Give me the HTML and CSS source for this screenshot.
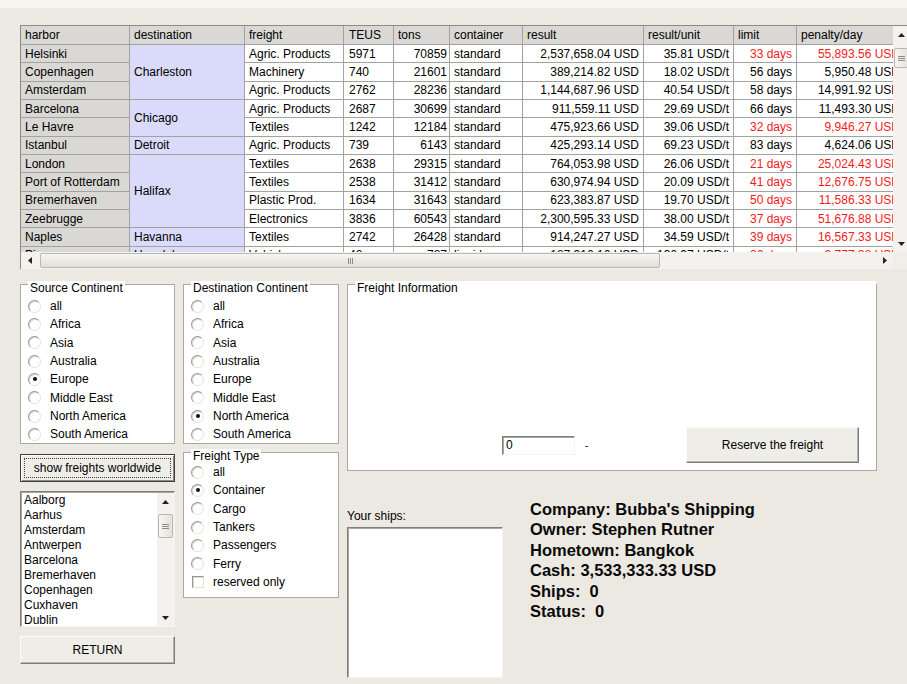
FILE: index.html
```html
<!DOCTYPE html>
<html lang="en">
<head>
<meta charset="utf-8">
<title>Freight Market</title>
<link rel="stylesheet" href="styles.css">
</head>
<body>
<div class="window">
  <div class="top-strip"></div>

  <section class="gridbox">
    <div class="grid-main">
      <div class="grid-clip">
        <table class="grid">
          <colgroup>
            <col class="w-harbor"><col class="w-dest"><col class="w-freight"><col class="w-teus"><col class="w-tons">
            <col class="w-cont"><col class="w-result"><col class="w-unit"><col class="w-limit"><col class="w-penalty">
          </colgroup>
          <thead>
            <tr><th>harbor</th><th>destination</th><th>freight</th><th class="teus">TEUS</th><th>tons</th><th>container</th><th>result</th><th>result/unit</th><th>limit</th><th>penalty/day</th></tr>
          </thead>
          <tbody>
            <tr><td class="harbor">Helsinki</td><td class="dest" rowspan="3">Charleston</td><td>Agric. Products</td><td class="teus">5971</td><td class="tons">70859</td><td>standard</td><td class="num">2,537,658.04 USD</td><td class="num">35.81 USD/t</td><td class="num late">33 days</td><td class="num late">55,893.56 USD</td></tr>
            <tr><td class="harbor">Copenhagen</td><td>Machinery</td><td class="teus">740</td><td class="tons">21601</td><td>standard</td><td class="num">389,214.82 USD</td><td class="num">18.02 USD/t</td><td class="num">56 days</td><td class="num">5,950.48 USD</td></tr>
            <tr><td class="harbor">Amsterdam</td><td>Agric. Products</td><td class="teus">2762</td><td class="tons">28236</td><td>standard</td><td class="num">1,144,687.96 USD</td><td class="num">40.54 USD/t</td><td class="num">58 days</td><td class="num">14,991.92 USD</td></tr>
            <tr><td class="harbor">Barcelona</td><td class="dest" rowspan="2">Chicago</td><td>Agric. Products</td><td class="teus">2687</td><td class="tons">30699</td><td>standard</td><td class="num">911,559.11 USD</td><td class="num">29.69 USD/t</td><td class="num">66 days</td><td class="num">11,493.30 USD</td></tr>
            <tr><td class="harbor">Le Havre</td><td>Textiles</td><td class="teus">1242</td><td class="tons">12184</td><td>standard</td><td class="num">475,923.66 USD</td><td class="num">39.06 USD/t</td><td class="num late">32 days</td><td class="num late">9,946.27 USD</td></tr>
            <tr><td class="harbor">Istanbul</td><td class="dest">Detroit</td><td>Agric. Products</td><td class="teus">739</td><td class="tons">6143</td><td>standard</td><td class="num">425,293.14 USD</td><td class="num">69.23 USD/t</td><td class="num">83 days</td><td class="num">4,624.06 USD</td></tr>
            <tr><td class="harbor">London</td><td class="dest" rowspan="4">Halifax</td><td>Textiles</td><td class="teus">2638</td><td class="tons">29315</td><td>standard</td><td class="num">764,053.98 USD</td><td class="num">26.06 USD/t</td><td class="num late">21 days</td><td class="num late">25,024.43 USD</td></tr>
            <tr><td class="harbor">Port of Rotterdam</td><td>Textiles</td><td class="teus">2538</td><td class="tons">31412</td><td>standard</td><td class="num">630,974.94 USD</td><td class="num">20.09 USD/t</td><td class="num late">41 days</td><td class="num late">12,676.75 USD</td></tr>
            <tr><td class="harbor">Bremerhaven</td><td>Plastic Prod.</td><td class="teus">1634</td><td class="tons">31643</td><td>standard</td><td class="num">623,383.87 USD</td><td class="num">19.70 USD/t</td><td class="num late">50 days</td><td class="num late">11,586.33 USD</td></tr>
            <tr><td class="harbor">Zeebrugge</td><td>Electronics</td><td class="teus">3836</td><td class="tons">60543</td><td>standard</td><td class="num">2,300,595.33 USD</td><td class="num">38.00 USD/t</td><td class="num late">37 days</td><td class="num late">51,676.88 USD</td></tr>
            <tr><td class="harbor">Naples</td><td class="dest">Havanna</td><td>Textiles</td><td class="teus">2742</td><td class="tons">26428</td><td>standard</td><td class="num">914,247.27 USD</td><td class="num">34.59 USD/t</td><td class="num late">39 days</td><td class="num late">16,567.33 USD</td></tr>
            <tr><td class="harbor">Piraeus</td><td class="dest">Honolulu</td><td>Vehicles</td><td class="teus">42</td><td class="tons">787</td><td>liquid</td><td class="num">187,316.16 USD</td><td class="num">136.97 USD/t</td><td class="num late">26 days</td><td class="num late">3,777.38 USD</td></tr>
          </tbody>
        </table>
      </div>
      <div class="vscroll">
        <div class="sb-btn"><svg width="7" height="4" viewBox="0 0 7 4"><polygon points="0,4 7,4 3.5,0" fill="#222"/></svg></div>
        <div class="sb-thumb v-thumb grid-vthumb"><i></i><i></i><i></i></div>
        <div class="sb-fill"></div>
        <div class="sb-btn"><svg width="7" height="4" viewBox="0 0 7 4"><polygon points="0,0 7,0 3.5,4" fill="#222"/></svg></div>
      </div>
    </div>
    <div class="hscroll-row">
      <div class="hscroll">
        <div class="sb-btn h-btn"><svg width="4" height="7" viewBox="0 0 4 7"><polygon points="4,0 4,7 0,3.5" fill="#222"/></svg></div>
        <div class="sb-thumb h-thumb"><i></i><i></i><i></i></div>
        <div class="sb-fill"></div>
        <div class="sb-btn h-btn"><svg width="4" height="7" viewBox="0 0 4 7"><polygon points="0,0 0,7 4,3.5" fill="#222"/></svg></div>
      </div>
      <div class="sb-corner"></div>
    </div>
  </section>

  <div class="lower">
    <div class="col col-a">
      <div class="group group-cont">
        <div class="group-title">Source Continent</div>
        <div class="opt"><span class="rb"></span>all</div>
        <div class="opt"><span class="rb"></span>Africa</div>
        <div class="opt"><span class="rb"></span>Asia</div>
        <div class="opt"><span class="rb"></span>Australia</div>
        <div class="opt"><span class="rb on"></span>Europe</div>
        <div class="opt"><span class="rb"></span>Middle East</div>
        <div class="opt"><span class="rb"></span>North America</div>
        <div class="opt"><span class="rb"></span>South America</div>
      </div>
      <div class="btn btn-default"><span class="focus">show freights worldwide</span></div>
      <div class="listbox harbors">
        <div class="list-items">
          <div>Aalborg</div><div>Aarhus</div><div>Amsterdam</div><div>Antwerpen</div><div>Barcelona</div>
          <div>Bremerhaven</div><div>Copenhagen</div><div>Cuxhaven</div><div>Dublin</div>
        </div>
        <div class="vscroll list-scroll">
          <div class="sb-btn"><svg width="7" height="4" viewBox="0 0 7 4"><polygon points="0,4 7,4 3.5,0" fill="#222"/></svg></div>
          <div class="sb-thumb v-thumb list-vthumb"><i></i><i></i><i></i></div>
          <div class="sb-fill"></div>
          <div class="sb-btn"><svg width="7" height="4" viewBox="0 0 7 4"><polygon points="0,0 7,0 3.5,4" fill="#222"/></svg></div>
        </div>
      </div>
      <div class="btn btn-return">RETURN</div>
    </div>

    <div class="col col-b">
      <div class="group group-cont">
        <div class="group-title">Destination Continent</div>
        <div class="opt"><span class="rb"></span>all</div>
        <div class="opt"><span class="rb"></span>Africa</div>
        <div class="opt"><span class="rb"></span>Asia</div>
        <div class="opt"><span class="rb"></span>Australia</div>
        <div class="opt"><span class="rb"></span>Europe</div>
        <div class="opt"><span class="rb"></span>Middle East</div>
        <div class="opt"><span class="rb on"></span>North America</div>
        <div class="opt"><span class="rb"></span>South America</div>
      </div>
      <div class="group group-type">
        <div class="group-title">Freight Type</div>
        <div class="opt"><span class="rb"></span>all</div>
        <div class="opt"><span class="rb on"></span>Container</div>
        <div class="opt"><span class="rb"></span>Cargo</div>
        <div class="opt"><span class="rb"></span>Tankers</div>
        <div class="opt"><span class="rb"></span>Passengers</div>
        <div class="opt"><span class="rb"></span>Ferry</div>
        <div class="opt"><span class="cb"></span>reserved only</div>
      </div>
    </div>

    <div class="col col-c">
      <div class="group freight-info">
        <div class="group-title">Freight Information</div>
        <div class="reserve-row">
          <div class="field">0</div>
          <span class="dash">-</span>
          <div class="btn btn-reserve">Reserve the freight</div>
        </div>
      </div>
      <div class="company-row">
        <div class="ships">
          <div class="ships-label">Your ships:</div>
          <div class="listbox ships-list"></div>
        </div>
        <div class="owner">
          <div>Company: Bubba's Shipping</div>
          <div>Owner: Stephen Rutner</div>
          <div>Hometown: Bangkok</div>
          <div>Cash: 3,533,333.33 USD</div>
          <div>Ships:&nbsp; 0</div>
          <div>Status:&nbsp; 0</div>
        </div>
      </div>
    </div>
  </div>
</div>
</body>
</html>
```

FILE: styles.css
```css
html, body {
  margin: 0;
  padding: 0;
  overflow: hidden;
}

body {
  background: #ece9e2;
  font-family: "Liberation Sans", Arial, sans-serif;
  font-size: 12px;
  color: #000;
}

.window {
  width: 907px;
  height: 684px;
  overflow: hidden;
}

.top-strip {
  height: 8px;
  background: #f6f5f1;
}

/* ---------- data grid ---------- */
.gridbox {
  margin: 17px 0 0 20px;
  width: 890px;
  border-top: 1px solid #8a8a86;
  border-left: 1px solid #8a8a86;
}

.grid-main {
  display: flex;
  height: 226px;
}

.grid-clip {
  width: 872px;
  overflow: hidden;
  background: #fff;
}

.grid {
  border-collapse: separate;
  border-spacing: 0;
  table-layout: fixed;
  width: 884px;
}

.w-harbor { width: 109px; }
.w-dest { width: 115px; }
.w-freight { width: 99px; }
.w-teus { width: 50px; }
.w-tons { width: 56px; }
.w-cont { width: 73px; }
.w-result { width: 121px; }
.w-unit { width: 90px; }
.w-limit { width: 63px; }
.w-penalty { width: 108px; }

.grid th,
.grid td {
  border-right: 1px solid #a2a2a0;
  border-bottom: 1px solid #a2a2a0;
  padding: 0 4px;
  white-space: nowrap;
  overflow: hidden;
  text-align: left;
  font-weight: normal;
  line-height: 14px;
  vertical-align: middle;
}

.grid thead tr { height: 19px; }
.grid tbody tr { height: 18.33px; }

.grid th,
.grid td.harbor {
  background: #d9d8d4;
}

.grid td.dest {
  background: #dadafa;
}

.grid .teus { padding-left: 5px; }
.grid td.tons { text-align: right; padding-right: 2px; }
.grid td.num { text-align: right; }
.grid td.late { color: #f51a1a; }

/* ---------- scrollbars ---------- */
.vscroll {
  width: 17px;
  flex: none;
  display: flex;
  flex-direction: column;
  background: #f3f2ee;
}

.sb-btn {
  width: 17px;
  height: 17px;
  flex: none;
  display: flex;
  align-items: center;
  justify-content: center;
}

.sb-fill { flex: 1; }

.sb-thumb {
  box-sizing: border-box;
  border: 1px solid #b9b8b1;
  border-radius: 2px;
  display: flex;
  align-items: center;
  justify-content: center;
}

.v-thumb {
  margin: 0 1px;
  flex-direction: column;
  gap: 1px;
  background: linear-gradient(to right, #f7f6f2, #e2e1da);
}

.v-thumb i {
  display: block;
  width: 7px;
  height: 1px;
  background: #8e8d88;
}

.grid-vthumb {
  margin-top: 5px;
  height: 20px;
}

.hscroll-row {
  display: flex;
  height: 17px;
}

.hscroll {
  width: 872px;
  display: flex;
  background: #f3f2ee;
}

.h-btn { height: 17px; }

.h-thumb {
  margin: 1px 0 1px 2px;
  width: 620px;
  gap: 1px;
  background: linear-gradient(to bottom, #f7f6f2, #dfded7);
}

.h-thumb i {
  display: block;
  width: 1px;
  height: 6px;
  background: #8e8d88;
}

.sb-corner {
  flex: 1;
  background: #efeee8;
}

/* ---------- lower panel ---------- */
.lower {
  display: flex;
  align-items: flex-start;
  margin: 15px 0 0 20px;
}

.col {
  display: flex;
  flex-direction: column;
}

.col-a { width: 155px; }
.col-b { width: 156px; margin-left: 8px; gap: 8px; }
.col-c { width: 530px; margin-left: 8px; }

.group {
  box-sizing: border-box;
  background: #fff;
  border: 1px solid #a9a9a4;
}

.group-title {
  display: table;
  margin: -4px 0 0 7px;
  padding: 0 2px;
  background: #fff;
  line-height: 14px;
}

.group-cont { height: 160px; }
.group-cont .group-title { margin-bottom: 2px; }
.group-type { height: 146px; }

.opt {
  height: 18.33px;
  display: flex;
  align-items: center;
  padding-left: 7px;
  white-space: nowrap;
}

.rb,
.cb {
  box-sizing: border-box;
  width: 13px;
  height: 13px;
  margin-right: 9px;
  flex: none;
  background: #fff;
  border: 1px solid;
  border-color: #98988f #e4e3dc #e4e3dc #98988f;
  box-shadow: inset 1px 1px 0 #dcdbd4;
  display: flex;
  align-items: center;
  justify-content: center;
}

.rb { border-radius: 50%; }

.rb.on::after {
  content: "";
  width: 4px;
  height: 4px;
  border-radius: 50%;
  background: #111;
}

.cb { width: 12px; height: 12px; margin-left: 1px; }

.btn {
  box-sizing: border-box;
  height: 28px;
  background: #eeede8;
  border: 1px solid;
  border-color: #fbfbf9 #7c7c78 #7c7c78 #fbfbf9;
  box-shadow: inset -1px -1px 0 #b4b3ac;
  display: flex;
  align-items: center;
  justify-content: center;
  white-space: nowrap;
}

.btn-default {
  margin-top: 10px;
  border-color: #3e3e3c;
  box-shadow: inset 1px 1px 0 #fbfbf9, inset -1px -1px 0 #8a8a86;
  padding: 3px;
}

.btn-default .focus {
  align-self: stretch;
  flex: 1;
  border: 1px dotted #444;
  display: flex;
  align-items: center;
  justify-content: center;
}

.listbox {
  box-sizing: border-box;
  background: #fff;
  border: 1px solid;
  border-color: #7f7f7a #f4f4f0 #f4f4f0 #7f7f7a;
  box-shadow: inset 1px 1px 0 #a8a8a2;
}

.harbors {
  margin-top: 9px;
  height: 136px;
  display: flex;
}

.list-items {
  flex: 1;
  padding: 1px 0 0 3px;
  line-height: 15px;
  overflow: hidden;
}

.list-scroll {
  margin: 1px 0 0 0;
}

.list-vthumb {
  margin-top: 4px;
  height: 24px;
}

.btn-return {
  margin-top: 9px;
}

.freight-info {
  height: 187px;
  display: flex;
  flex-direction: column;
}

.reserve-row {
  margin-top: auto;
  display: flex;
  align-items: center;
  padding: 0 17px 7px 154px;
}

.field {
  box-sizing: border-box;
  width: 73px;
  height: 19px;
  border: 1px solid;
  border-color: #7f7f7a #f4f4f0 #f4f4f0 #7f7f7a;
  box-shadow: inset 1px 1px 0 #a8a8a2;
  padding-left: 3px;
  line-height: 17px;
}

.dash {
  margin-left: 10px;
  font-size: 10px;
}

.btn-reserve {
  margin-left: auto;
  width: 173px;
  height: 36px;
}

.company-row {
  display: flex;
  align-items: flex-start;
  margin-top: 28px;
}

.ships {
  width: 156px;
  padding-top: 10px;
}

.ships-label {
  line-height: 14px;
}

.ships-list {
  margin-top: 4px;
  height: 151px;
}

.owner {
  margin-left: 27px;
  font-weight: bold;
  font-size: 16.5px;
  line-height: 20.4px;
  color: #0a0a0a;
  white-space: nowrap;
}
```
